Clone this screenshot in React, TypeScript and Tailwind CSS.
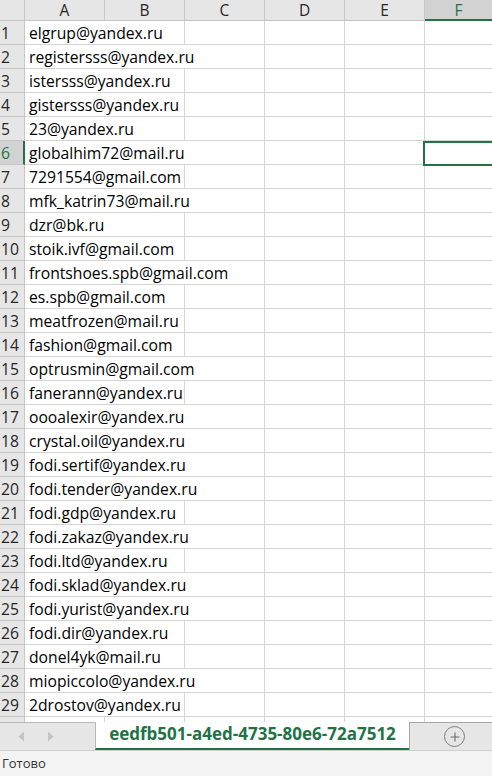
import { Plus } from "lucide-react";

const emails = [
  "elgrup@yandex.ru",
  "registersss@yandex.ru",
  "istersss@yandex.ru",
  "gistersss@yandex.ru",
  "23@yandex.ru",
  "globalhim72@mail.ru",
  "7291554@gmail.com",
  "mfk_katrin73@mail.ru",
  "dzr@bk.ru",
  "stoik.ivf@gmail.com",
  "frontshoes.spb@gmail.com",
  "es.spb@gmail.com",
  "meatfrozen@mail.ru",
  "fashion@gmail.com",
  "optrusmin@gmail.com",
  "fanerann@yandex.ru",
  "oooalexir@yandex.ru",
  "crystal.oil@yandex.ru",
  "fodi.sertif@yandex.ru",
  "fodi.tender@yandex.ru",
  "fodi.gdp@yandex.ru",
  "fodi.zakaz@yandex.ru",
  "fodi.ltd@yandex.ru",
  "fodi.sklad@yandex.ru",
  "fodi.yurist@yandex.ru",
  "fodi.dir@yandex.ru",
  "donel4yk@mail.ru",
  "miopiccolo@yandex.ru",
  "2drostov@yandex.ru",
  "",
];

const columns = ["A", "B", "C", "D", "E"];
const SELECTED_ROW = 6;

function HeaderRow() {
  return (
    <div className="flex h-[21px] shrink-0">
      <div className="w-[25px] shrink-0 border-r border-b border-[#c6c6c6] bg-[#e6e6e6]" />
      {columns.map((c) => (
        <div
          key={c}
          className="w-[80px] shrink-0 border-r border-b border-[#c6c6c6] bg-[#e6e6e6] text-center text-[15.5px] leading-[20px] text-[#262626]"
        >
          {c}
        </div>
      ))}
      <div className="flex-1 border-b-2 border-[#217346] bg-[#d2d2d2] text-center text-[15.5px] leading-[20px] text-[#217346]">
        F
      </div>
    </div>
  );
}

function Row({ n, text }: { n: number; text: string }) {
  const selected = n === SELECTED_ROW;
  const last = n > emails.length - 1;
  return (
    <div className="flex h-[24px] shrink-0">
      <div
        className={
          selected
            ? "w-[25px] shrink-0 border-b border-r-2 border-b-[#c6c6c6] border-r-[#217346] bg-[#d2d2d2] pl-[1px] pt-[1px] text-[15.7px] leading-[22px] text-[#217346] whitespace-nowrap overflow-hidden"
            : "w-[25px] shrink-0 border-r border-b border-[#c6c6c6] bg-[#e6e6e6] pl-[1px] pt-[1px] text-[15.7px] leading-[22px] text-[#262626] whitespace-nowrap overflow-hidden"
        }
      >
        {last ? "" : n}
      </div>
      <div className="w-[80px] shrink-0 border-r border-b border-[#d4d4d4]">
        {text && (
          <span className="relative z-10 inline-block h-[23px] bg-white pl-[4px] pr-[1px] pt-[2px] text-[15.7px] leading-[21px] whitespace-nowrap text-black">
            {text}
          </span>
        )}
      </div>
      {columns.slice(1).map((c) => (
        <div key={c} className="w-[80px] shrink-0 border-r border-b border-[#d4d4d4]" />
      ))}
      <div className="relative flex-1 border-b border-[#d4d4d4]">
        {selected && (
          <div className="absolute -left-[2px] top-0 -bottom-[2px] -right-[4px] z-20 border-2 border-[#217346]" />
        )}
      </div>
    </div>
  );
}

export default function App() {
  return (
    <div
      className="flex h-[776px] w-[492px] flex-col overflow-hidden bg-white"
      style={{ fontFamily: '"Open Sans", "Liberation Sans", sans-serif' }}
    >
      <div className="flex h-[722px] shrink-0 flex-col overflow-hidden">
        <HeaderRow />
        {emails.map((e, i) => (
          <Row key={i} n={i + 1} text={e} />
        ))}
      </div>

      {/* sheet tabs */}
      <div className="flex h-[29px] shrink-0 border-b border-[#d0d0d0] bg-[#e6e6e6]">
        <div className="flex w-[95px] shrink-0 items-center gap-[22px] border-t border-[#b8b8b8] pl-[18px]">
          <svg width="7" height="11" viewBox="0 0 7 11">
            <path d="M6 0.5 L0.5 5.5 L6 10.5 Z" fill="#c3c3c3" />
          </svg>
          <svg width="7" height="11" viewBox="0 0 7 11">
            <path d="M1 0.5 L6.5 5.5 L1 10.5 Z" fill="#c3c3c3" />
          </svg>
        </div>
        <div className="flex w-[314px] shrink-0 items-start justify-center border-b-2 border-l border-[#217346] border-l-[#b8b8b8] bg-white text-[17px] font-bold leading-[24px] text-[#217346]">
          eedfb501-a4ed-4735-80e6-72a7512
        </div>
        <div className="flex flex-1 items-center border-t border-l border-[#a8a8a8] pl-[34px]">
          <div className="flex h-[21px] w-[21px] items-center justify-center rounded-full border-[1.5px] border-[#7d7d7d]">
            <Plus size={14} strokeWidth={2} color="#6e6e6e" />
          </div>
        </div>
      </div>

      {/* status bar */}
      <div className="flex flex-1 items-center bg-[#f3f3f3] pl-[2px] text-[13px] text-[#333]">
        Готово
      </div>
    </div>
  );
}
